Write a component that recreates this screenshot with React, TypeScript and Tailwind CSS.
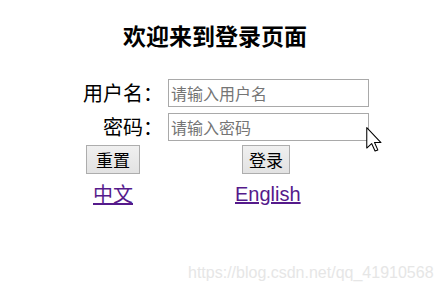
export default function App() {
  return (
    <div
      className="relative h-[293px] w-full overflow-hidden bg-white text-black"
      style={{ fontFamily: '"Noto Sans CJK SC", "Liberation Sans", sans-serif' }}
    >
      <h1 className="pl-[123px] pt-[24px] text-[23px] font-bold leading-[23px]">欢迎来到登录页面</h1>

      <form className="mt-[32px] ml-[68px] grid grid-cols-[95px_201px] gap-x-[5px] gap-y-[6px]">
        <label className="text-right text-[20px] leading-[28px]">用户名：</label>
        <input
          type="text"
          placeholder="请输入用户名"
          className="h-[28px] w-[201px] border border-[#a9a9a9] px-[2px] text-[16px] outline-none placeholder:text-[#757575]"
        />
        <label className="text-right text-[20px] leading-[28px]">密码：</label>
        <input
          type="password"
          placeholder="请输入密码"
          className="h-[28px] w-[201px] border border-[#a9a9a9] px-[2px] text-[16px] outline-none placeholder:text-[#757575]"
        />
      </form>

      <div className="mt-[4px] flex">
        <button
          type="reset"
          className="ml-[86px] h-[29px] w-[54px] border border-[#adadad] bg-gradient-to-b from-[#f0f0f0] to-[#e2e2e2] text-[17px] leading-none"
        >
          重置
        </button>
        <button
          type="submit"
          className="ml-[102px] h-[29px] w-[48px] border border-[#adadad] bg-gradient-to-b from-[#f0f0f0] to-[#e2e2e2] text-[17px] leading-none"
        >
          登录
        </button>
      </div>

      <div className="mt-[10px] flex text-[20px] leading-[20px] text-[#551a8b]">
        <a href="#" className="ml-[93px] underline">中文</a>
        <a href="#" className="ml-[102px] underline" style={{ fontFamily: '"Liberation Sans", sans-serif' }}>
          English
        </a>
      </div>

      <span
        className="absolute left-[188px] top-[265px] text-[16px] leading-none text-[#e6e6e6]"
        style={{ fontFamily: '"Liberation Sans", Arial, sans-serif' }}
      >
        https://blog.csdn.net/qq_41910568
      </span>

      <svg className="absolute left-[366px] top-[127px]" width="16" height="25" viewBox="0 0 12 19">
        <path
          d="M0.5 0.5 L0.5 16 L4.2 12.6 L6.8 18.3 L8.9 17.4 L6.4 11.8 L11.3 11.8 Z"
          fill="white"
          stroke="black"
          strokeWidth="0.8"
          strokeLinejoin="round"
        />
      </svg>
    </div>
  );
}
